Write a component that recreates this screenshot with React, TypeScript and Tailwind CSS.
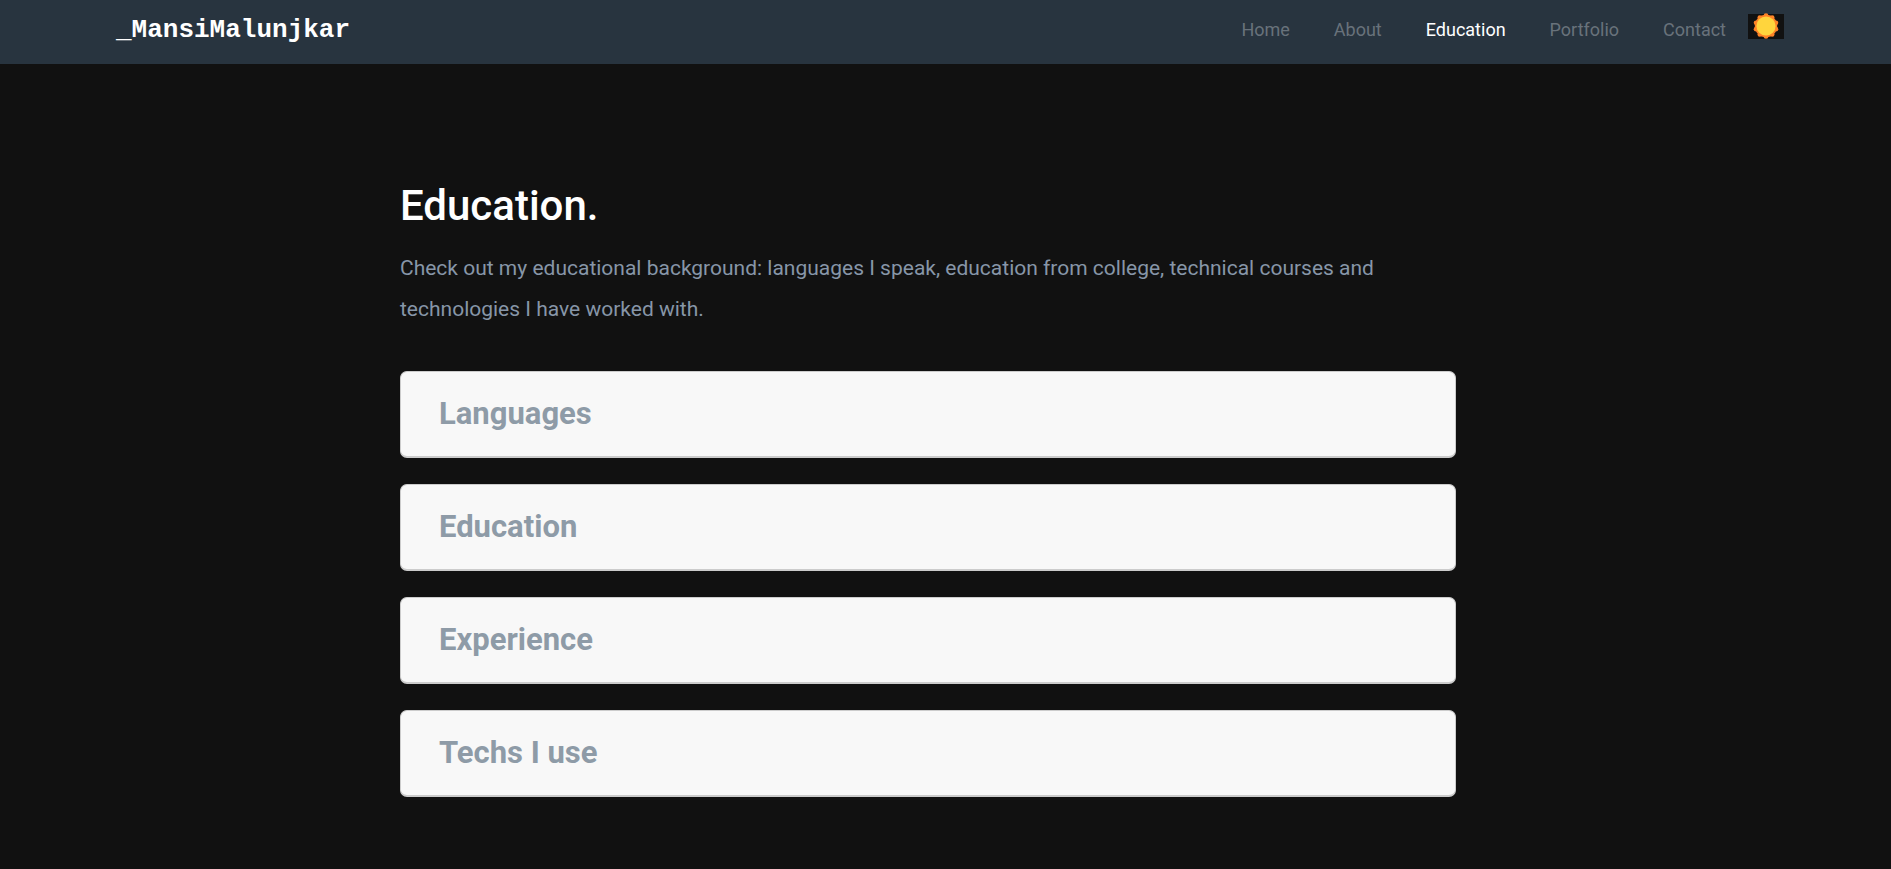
const links = ["Home", "About", "Education", "Portfolio", "Contact"];
const sections = ["Languages", "Education", "Experience", "Techs I use"];

function SunIcon() {
  const petals = Array.from({ length: 10 }, (_, i) => (i * 36 * Math.PI) / 180);
  return (
    <svg viewBox="0 0 26 26" className="size-[26px] shrink-0" aria-hidden="true">
      <circle cx="13" cy="13" r="11.2" fill="#ff8427" />
      {petals.map((a) => (
        <circle key={a} cx={13 + Math.sin(a) * 10.4} cy={13 - Math.cos(a) * 10.4} r="2.4" fill="#ff8427" />
      ))}
      <circle cx="13" cy="13" r="9.6" fill="#ffd53d" />
    </svg>
  );
}

export default function App() {
  return (
    <div className="min-h-screen bg-[#111111] font-[Roboto,sans-serif]">
      <header className="flex h-16 items-start justify-between bg-[#28343f] pr-[107px] pl-[116px]">
        <a href="#home" className="pt-[14px] font-['Courier_New','Liberation_Mono',monospace] text-[26px] leading-8 font-bold text-white">
          _MansiMalunjkar
        </a>
        <div className="flex items-start">
          <nav className="flex gap-[44px] pt-4">
            {links.map((label) => (
              <a
                key={label}
                href={`#${label.toLowerCase()}`}
                className={label === "Education" ? "text-[18px] leading-7 text-white" : "text-[18px] leading-7 text-[#68727b]"}
              >
                {label}
              </a>
            ))}
          </nav>
          <button type="button" aria-label="Toggle theme" className="mt-[14px] ml-[22px] flex h-[25px] w-9 items-end justify-center bg-[#111111]">
            <SunIcon />
          </button>
        </div>
      </header>

      <main className="flex justify-center pt-[117px] pr-[35px] pb-16">
        <div className="w-full max-w-[1056px]">
          <h1 className="text-[42px] leading-[50px] font-medium text-white">Education.</h1>
          <p className="mt-[17px] text-[21px] leading-[41px] text-[#8796a8]">
            Check out my educational background: languages I speak, education from college, technical courses and
            technologies I have worked with.
          </p>
          <div className="mt-[41px] flex flex-col gap-[26px]">
            {sections.map((title) => (
              <button
                key={title}
                type="button"
                className="flex h-[87px] items-center rounded-[7px] border border-b-2 border-[#cccccc] bg-[#f8f8f8] px-[38px] text-left text-[31px] leading-10 font-bold text-[#8e9ba7]"
              >
                {title}
              </button>
            ))}
          </div>
        </div>
      </main>
    </div>
  );
}
